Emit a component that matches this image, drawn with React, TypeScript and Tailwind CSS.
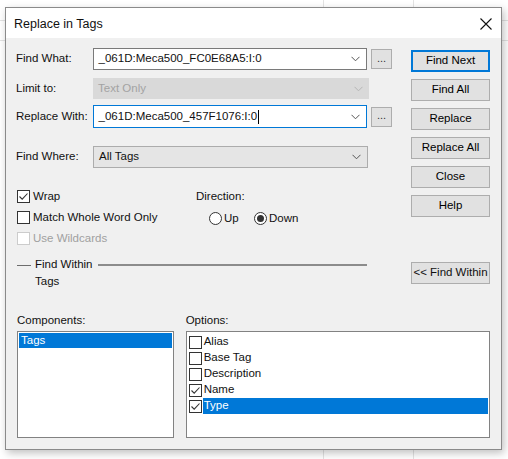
import React from "react";

const Check = ({ checked, disabled }: { checked?: boolean; disabled?: boolean }) => (
  <span
    className={`relative inline-block w-[13px] h-[13px] border bg-white shrink-0 ${
      disabled ? "border-[#cccccc]" : "border-[#333333]"
    }`}
  >
    {checked && (
      <svg width="11" height="11" viewBox="0 0 11 11" className="absolute left-0 top-0">
        <path d="M1.5 5.5 L4.2 8.2 L9.5 2.5" fill="none" stroke="#333" strokeWidth="1.1" />
      </svg>
    )}
  </span>
);

const Radio = ({ checked }: { checked?: boolean }) => (
  <span className="inline-flex items-center justify-center w-[13px] h-[13px] rounded-full border border-[#333333] bg-white shrink-0">
    {checked && <span className="w-[7px] h-[7px] rounded-full bg-[#333333]" />}
  </span>
);

const Chevron = ({ color = "#555" }: { color?: string }) => (
  <svg width="9" height="6" viewBox="0 0 9 6" className="shrink-0">
    <path d="M0.5 0.8 L4.5 4.8 L8.5 0.8" fill="none" stroke={color} strokeWidth="1" />
  </svg>
);

const Btn = ({ label, focused, className = "" }: { label: string; focused?: boolean; className?: string }) => (
  <div
    className={`w-[79px] h-[22px] flex items-center justify-center bg-[#e1e1e1] text-[#000] ${
      focused ? "border-2 border-[#0078d7]" : "border border-[#adadad]"
    } ${className}`}
  >
    {label}
  </div>
);

const Ellipsis = () => (
  <div className="ml-[4px] w-[21px] h-[20px] border border-[#adadad] bg-[#e1e1e1] flex items-center justify-center text-[#333] text-[11px] leading-none pb-[2px]">
    ...
  </div>
);

export default function App() {
  return (
    <div className="relative w-[508px] h-[459px] bg-white overflow-hidden font-['Liberation_Sans',Arial,sans-serif] text-[11.5px] text-[#111]">
      {/* background spreadsheet grid lines */}
      <div className="absolute left-0 top-[20px] w-[508px] h-px bg-[#e3e3e3]" />
      <div className="absolute left-0 top-[40px] w-[508px] h-px bg-[#e3e3e3]" />
      <div className="absolute left-[323px] top-0 w-px h-[459px] bg-[#e3e3e3]" />
      <div className="absolute left-[413px] top-0 w-px h-[459px] bg-[#e3e3e3]" />

      <div className="absolute left-[5px] top-[7px] w-[497px] h-[443px] border border-[#8a8a8a] bg-[#f0f0f0] shadow-[2px_3px_8px_rgba(0,0,0,0.25)] flex flex-col">
        {/* title bar */}
        <div className="h-[30px] bg-white flex items-center justify-between pl-[8px] pr-[8px] shrink-0">
          <span className="text-[12.5px] pt-[2px]">Replace in Tags</span>
          <svg width="12" height="12" viewBox="0 0 12 12" className="mr-[1px] mt-[2px]">
            <path d="M0.5 0.5 L11.5 11.5 M11.5 0.5 L0.5 11.5" stroke="#111" strokeWidth="1.1" />
          </svg>
        </div>

        {/* body */}
        <div className="flex-1 pl-[10px] pr-[11px] pt-[10px] flex flex-col">
          <div className="flex">
            {/* left column */}
            <div className="w-[376px] flex flex-col">
              <div className="flex items-center h-[22px]">
                <span className="w-[77px]">Find What:</span>
                <div className="w-[276px] h-[22px] border border-[#7a7a7a] bg-white flex items-center justify-between pl-[5px] pr-[6px]">
                  <span>_061D:Meca500_FC0E68A5:I:0</span>
                  <Chevron />
                </div>
                <Ellipsis />
              </div>
              <div className="flex items-center h-[21px] mt-[8px]">
                <span className="w-[77px]">Limit to:</span>
                <div className="w-[276px] h-[21px] bg-[#d9d9d9] flex items-center justify-between pl-[5px] pr-[6px] text-[#a3a3a3]">
                  <span>Text Only</span>
                  <Chevron color="#b5b5b5" />
                </div>
              </div>
              <div className="flex items-center h-[23px] mt-[6px]">
                <span className="w-[77px]">Replace With:</span>
                <div className="w-[276px] h-[23px] border border-[#0078d7] bg-white flex items-center justify-between pl-[5px] pr-[6px]">
                  <span className="flex items-center">
                    _061D:Meca500_457F1076:I:0
                    <span className="inline-block w-px h-[14px] bg-black ml-[1px]" />
                  </span>
                  <Chevron />
                </div>
                <Ellipsis />
              </div>
              <div className="flex items-center h-[22px] mt-[18px]">
                <span className="w-[77px]">Find Where:</span>
                <div className="w-[275px] h-[22px] border border-[#acacac] bg-[#e5e5e5] flex items-center justify-between pl-[5px] pr-[6px]">
                  <span>All Tags</span>
                  <Chevron />
                </div>
              </div>

              <div className="flex mt-[18px]">
                <div className="w-[180px] flex flex-col">
                  <div className="flex items-center gap-[3px] h-[21px] pl-px">
                    <Check checked />
                    <span>Wrap</span>
                  </div>
                  <div className="flex items-center gap-[3px] h-[21px] pl-px">
                    <Check />
                    <span>Match Whole Word Only</span>
                  </div>
                  <div className="flex items-center gap-[3px] h-[21px] pl-px text-[#a0a0a0]">
                    <Check disabled />
                    <span>Use Wildcards</span>
                  </div>
                </div>
                <div className="flex flex-col pt-[2px]">
                  <div className="h-[18px] flex items-center">Direction:</div>
                  <div className="flex items-center mt-[4px] pl-[13px] h-[17px]">
                    <Radio />
                    <span className="ml-[2px] w-[30px]">Up</span>
                    <Radio checked />
                    <span className="ml-[2px]">Down</span>
                  </div>
                </div>
              </div>
            </div>

            {/* right buttons */}
            <div className="ml-[19px] flex flex-col gap-[7px] pt-[2px]">
              <Btn label="Find Next" focused />
              <Btn label="Find All" />
              <Btn label="Replace" />
              <Btn label="Replace All" />
              <Btn label="Close" />
              <Btn label="Help" />
            </div>
          </div>

          {/* Find Within */}
          <div className="flex mt-[6px]">
            <div className="w-[351px] flex flex-col pl-px">
              <div className="flex items-center h-[20px]">
                <div className="w-[14px] h-px bg-[#6d6d6d]" />
                <span className="ml-[4px] mr-[5px]">Find Within</span>
                <div className="flex-1 h-[2px] bg-[#8c8c8c]" />
              </div>
              <div className="pl-[18px] h-[14px] flex items-center">Tags</div>
            </div>
            <div className="ml-[44px] mt-[7px]">
              <div className="w-[79px] h-[22px] border border-[#adadad] bg-[#e1e1e1] flex items-center justify-center">
                &lt;&lt; Find Within
              </div>
            </div>
          </div>

          {/* Components / Options */}
          <div className="flex mt-[25px] pl-px">
            <div className="flex flex-col w-[157px]">
              <span className="h-[14px] flex items-center">Components:</span>
              <div className="mt-[3px] h-[107px] border border-[#828282] bg-white p-px">
                <div className="h-[15px] bg-[#0078d7] text-white flex items-center pl-[2px]">Tags</div>
              </div>
            </div>
            <div className="flex flex-col ml-[12px] w-[305px]">
              <span className="h-[14px] flex items-center">Options:</span>
              <div className="mt-[3px] h-[107px] border border-[#828282] bg-white pt-[2px] pl-[2px] pr-px">
                {[
                  { t: "Alias", c: false },
                  { t: "Base Tag", c: false },
                  { t: "Description", c: false },
                  { t: "Name", c: true },
                  { t: "Type", c: true, sel: true },
                ].map((o) => (
                  <div key={o.t} className="flex items-center h-[16px]">
                    <Check checked={o.c} />
                    <span
                      className={`ml-px flex-1 h-[16px] flex items-center pl-px ${
                        o.sel ? "bg-[#0078d7] text-white" : ""
                      }`}
                    >
                      {o.t}
                    </span>
                  </div>
                ))}
              </div>
            </div>
          </div>
        </div>
      </div>
    </div>
  );
}
